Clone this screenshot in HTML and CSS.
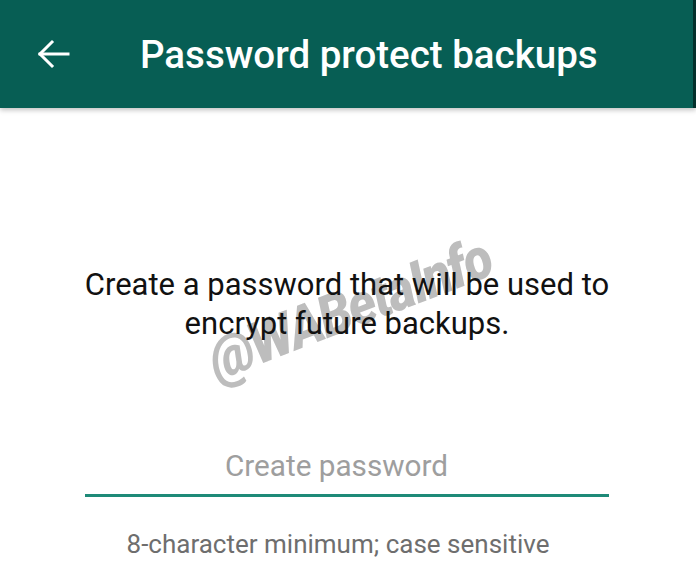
FILE: index.html
```html
<!DOCTYPE html>
<html>
<head>
<meta charset="utf-8">
<link rel="stylesheet" href="styles.css">
</head>
<body>
<div class="screen">
  <header class="appbar">
    <svg class="back" width="34" height="30" viewBox="0 0 34 30" fill="none" stroke="#ffffff" stroke-width="3" stroke-linecap="square">
      <path d="M3 15H31"/>
      <path d="M15 3L3 15L15 27"/>
    </svg>
    <h1 class="title">Password protect backups</h1>
    <div class="edge"></div>
  </header>
  <main class="content">
    <div class="watermark">@WABetaInfo</div>
    <p class="intro">Create a password that will be used to encrypt future backups.</p>
    <div class="field">
      <div class="placeholder">Create password</div>
      <div class="underline"></div>
    </div>
    <p class="helper">8-character minimum; case sensitive</p>
  </main>
</div>
</body>
</html>
```
FILE: styles.css
```css
html, body {
  margin: 0;
  padding: 0;
  background: #ffffff;
}
.screen {
  width: 696px;
  height: 563px;
  overflow: hidden;
  font-family: Roboto, "Noto Sans", sans-serif;
  display: flex;
  flex-direction: column;
}
.appbar {
  position: relative;
  height: 108px;
  flex: none;
  background: #075e54;
  display: flex;
  align-items: center;
  padding-left: 37px;
  box-shadow: 0 2px 5px rgba(0,0,0,0.25);
  z-index: 2;
}
.back {
  flex: none;
  display: block;
}
.title {
  margin: 0 0 0 69px;
  color: #ffffff;
  font-size: 38.5px;
  font-weight: 500;
  letter-spacing: 0;
}
.edge {
  position: absolute;
  right: 0;
  top: 0;
  width: 3px;
  height: 108px;
  background: #03302b;
}
.content {
  position: relative;
  flex: 1;
  display: flex;
  flex-direction: column;
  align-items: center;
  padding: 0 87px 0 85px;
}
.intro {
  position: relative;
  z-index: 1;
  align-self: stretch;
  margin: 157px -40px 0 -40px;
  text-align: center;
  font-size: 31px;
  line-height: 39px;
  color: #111111;
}
.field {
  align-self: stretch;
  margin-top: 106px;
  display: flex;
  flex-direction: column;
  align-items: center;
}
.placeholder {
  font-size: 29.7px;
  line-height: 34px;
  color: #9e9e9e;
  margin-right: 21px;
}
.underline {
  align-self: stretch;
  height: 3px;
  margin-top: 11px;
  background: #1e8a78;
}
.helper {
  margin: 30px 18px 0 0;
  font-size: 26px;
  line-height: 34px;
  color: #6e6e6e;
}
.watermark {
  position: absolute;
  z-index: 0;
  left: 210px;
  top: 220px;
  font-size: 58px;
  font-weight: 900;
  font-style: italic;
  color: #bdbdbd;
  transform: rotate(-21deg) scaleX(0.9);
  transform-origin: left center;
  white-space: nowrap;
  letter-spacing: -2px;
}
```
